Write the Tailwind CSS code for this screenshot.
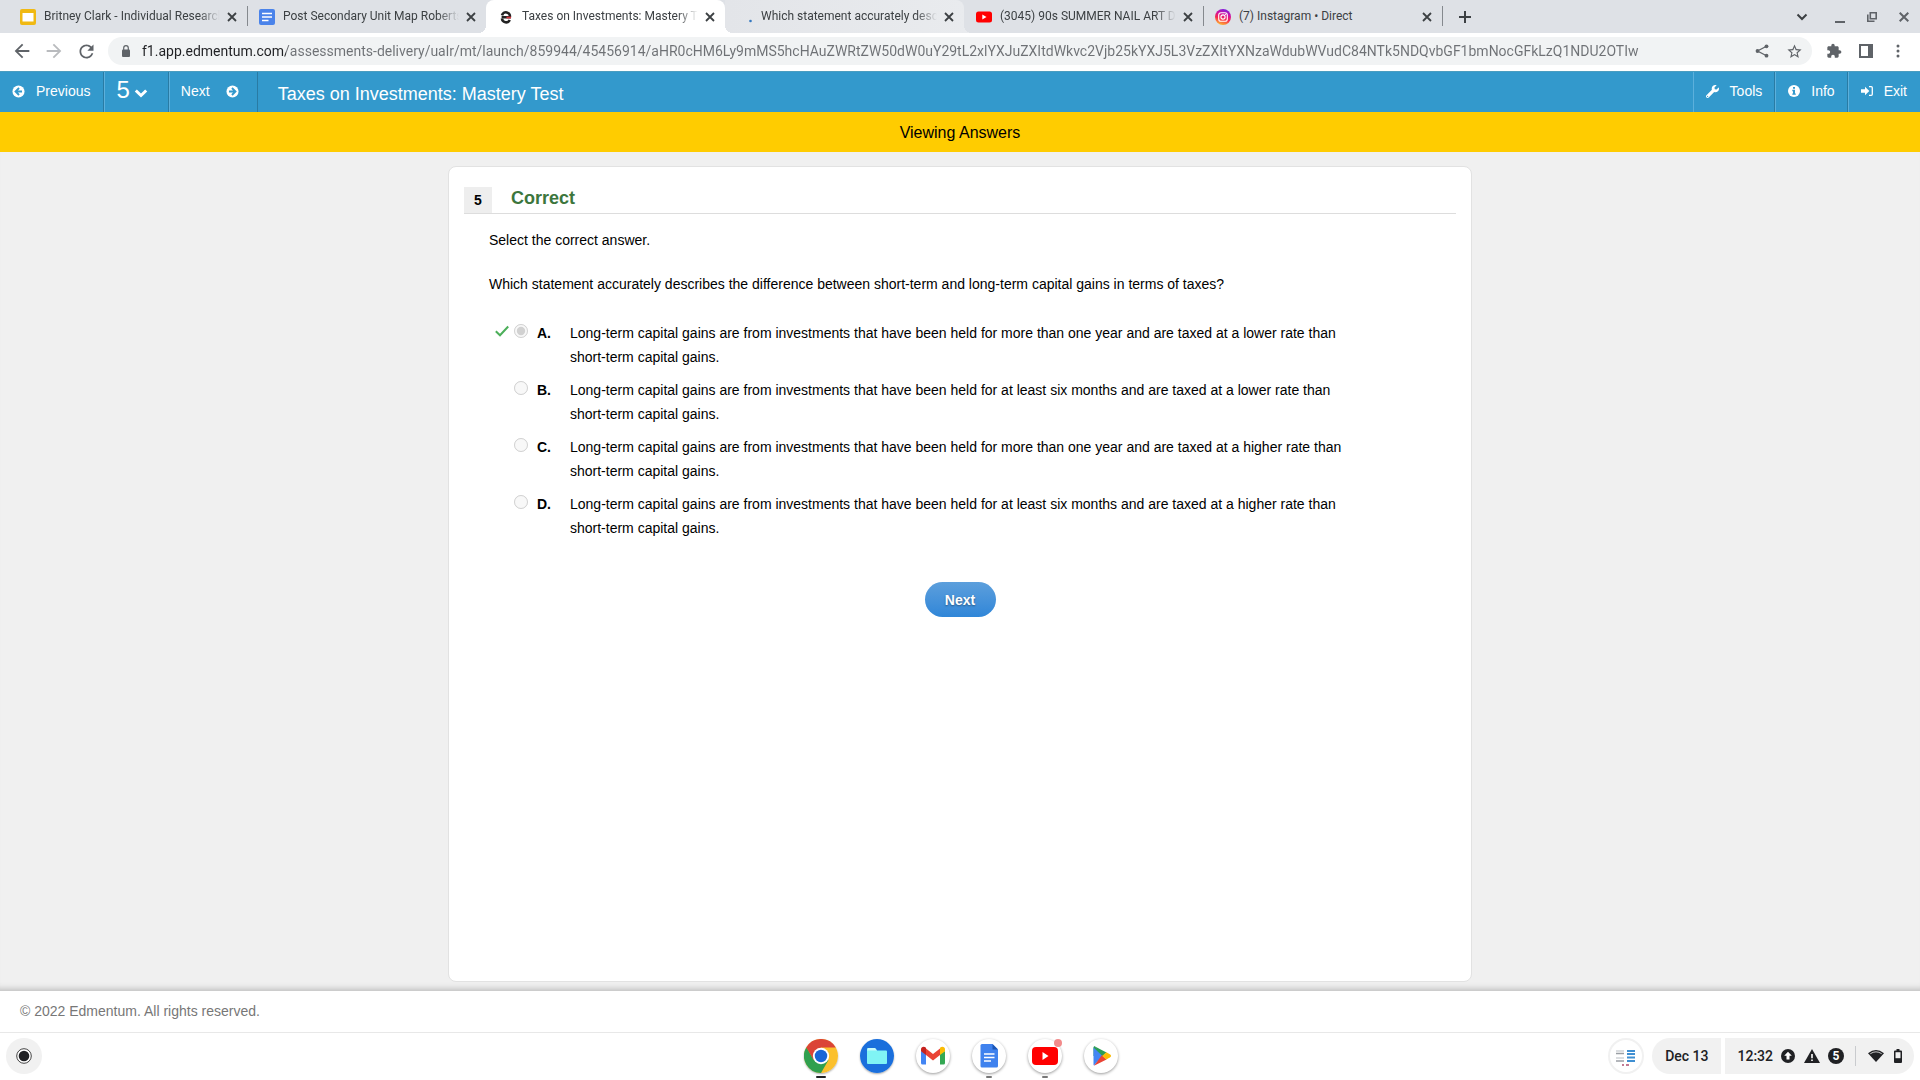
<!DOCTYPE html>
<html lang="en">
<head>
    <meta charset="UTF-8">
    <meta name="viewport" content="width=device-width, initial-scale=1.0">
    <title>Taxes on Investments: Mastery Test</title>
    <script src="https://cdn.jsdelivr.net/npm/@tailwindcss/browser@4"></script>
</head>
<body class="min-h-screen flex flex-col bg-white font-['Liberation_Sans',Arial,sans-serif] text-sm text-black">

    <!-- Browser tabs -->
    <div class="h-[33px] flex items-stretch justify-between bg-[#dee1e6] font-[Roboto,sans-serif] text-xs text-[#3c4043]">
        <div class="flex pl-2 min-w-0">
            <div class="w-[239px] flex items-center pl-3 pr-[7px]">
                <svg class="size-4 shrink-0" viewBox="0 0 16 16"><rect width="16" height="16" rx="2" fill="#f0b913"/><rect x="2.500" y="4" width="11" height="8.500" fill="#fff"/></svg>
                <span class="flex-1 ml-2 pb-px overflow-hidden whitespace-nowrap [mask-image:linear-gradient(to_right,black_88%,transparent)]">Britney Clark - Individual Research</span>
                <button class="size-4 ml-1 flex items-center justify-center" aria-label="Close tab"><svg class="size-2.5" viewBox="0 0 10 10" stroke="#3c4043" stroke-width="1.800"><path d="M1 1l8 8M9 1l-8 8"/></svg></button>
            </div>
            <div class="relative w-[239px] flex items-center pl-3 pr-[7px] before:absolute before:left-0 before:top-1.5 before:h-5 before:w-px before:bg-[#85898e]">
                <svg class="size-4 shrink-0" viewBox="0 0 16 16"><rect width="16" height="16" rx="2" fill="#4a83ea"/><path d="M3 4.500h10M3 8h10M3 11.500h6.500" stroke="#fff" stroke-width="1.500"/></svg>
                <span class="flex-1 ml-2 pb-px overflow-hidden whitespace-nowrap [mask-image:linear-gradient(to_right,black_88%,transparent)]">Post Secondary Unit Map Roberts</span>
                <button class="size-4 ml-1 flex items-center justify-center" aria-label="Close tab"><svg class="size-2.5" viewBox="0 0 10 10" stroke="#3c4043" stroke-width="1.800"><path d="M1 1l8 8M9 1l-8 8"/></svg></button>
            </div>
            <div class="relative z-10 w-[239px] flex items-center pl-3 pr-[7px] bg-white rounded-t-lg before:absolute before:-left-2 before:bottom-0 before:size-2 before:bg-[radial-gradient(circle_at_0_0,transparent_8px,white_8px)] after:absolute after:-right-2 after:bottom-0 after:size-2 after:bg-[radial-gradient(circle_at_100%_0,transparent_8px,white_8px)]">
                <svg class="size-4 shrink-0" viewBox="0 0 16 16" fill="none" stroke-width="2.600"><path d="M3.600 8.300H11.800A4 4 0 0 0 4 6.400" stroke="#222"/><path d="M4 9.500A4.100 4.100 0 0 0 11.800 11" stroke="#222"/><path d="M8.500 8.500h4.500" stroke="#d8343d" stroke-width="1.800"/></svg>
                <span class="flex-1 ml-2 pb-px overflow-hidden whitespace-nowrap [mask-image:linear-gradient(to_right,black_88%,transparent)]">Taxes on Investments: Mastery Test</span>
                <button class="size-4 ml-1 flex items-center justify-center" aria-label="Close tab"><svg class="size-2.5" viewBox="0 0 10 10" stroke="#3c4043" stroke-width="1.800"><path d="M1 1l8 8M9 1l-8 8"/></svg></button>
            </div>
            <div class="relative w-[239px] flex items-center pl-3 pr-[7px] rounded-tr-lg bg-linear-to-r from-[#e3e5e9] to-[#e9ebee] after:absolute after:-right-2 after:bottom-0 after:size-2 after:bg-[radial-gradient(circle_at_100%_0,transparent_8px,#e9ebee_8px)]">
                <svg class="size-4 shrink-0" viewBox="0 0 16 16"><circle cx="13.500" cy="12" r="1.300" fill="#3578c0"/></svg>
                <span class="flex-1 ml-2 pb-px overflow-hidden whitespace-nowrap [mask-image:linear-gradient(to_right,black_88%,transparent)]">Which statement accurately describes</span>
                <button class="size-4 ml-1 flex items-center justify-center" aria-label="Close tab"><svg class="size-2.5" viewBox="0 0 10 10" stroke="#3c4043" stroke-width="1.800"><path d="M1 1l8 8M9 1l-8 8"/></svg></button>
            </div>
            <div class="w-[239px] flex items-center pl-3 pr-[7px]">
                <svg class="size-4 shrink-0" viewBox="0 0 16 16"><rect y="2.500" width="16" height="11" rx="2.500" fill="#f00"/><path d="M6.300 5.500v5l4.200-2.500z" fill="#fff"/></svg>
                <span class="flex-1 ml-2 pb-px overflow-hidden whitespace-nowrap [mask-image:linear-gradient(to_right,black_88%,transparent)]">(3045) 90s SUMMER NAIL ART DESIGNS</span>
                <button class="size-4 ml-1 flex items-center justify-center" aria-label="Close tab"><svg class="size-2.5" viewBox="0 0 10 10" stroke="#3c4043" stroke-width="1.800"><path d="M1 1l8 8M9 1l-8 8"/></svg></button>
            </div>
            <div class="relative w-[239px] flex items-center pl-3 pr-[7px] before:absolute before:left-0 before:top-1.5 before:h-5 before:w-px before:bg-[#85898e] after:absolute after:-right-px after:top-1.5 after:h-5 after:w-px after:bg-[#85898e]">
                <svg class="size-4 shrink-0" viewBox="0 0 16 16" fill="none"><defs><linearGradient id="insta" x1=".3" y1="1" x2=".6" y2="0"><stop offset="0" stop-color="#fdc02f"/><stop offset=".4" stop-color="#f7284f"/><stop offset=".7" stop-color="#d010a0"/><stop offset="1" stop-color="#7a1fe0"/></linearGradient></defs><circle cx="8" cy="8" r="8" fill="url(#insta)"/><rect x="3.700" y="3.700" width="8.600" height="8.600" rx="2.400" stroke="#fff" stroke-width="1.100"/><circle cx="8" cy="8" r="2.100" stroke="#fff" stroke-width="1.100"/><circle cx="10.500" cy="5.500" r=".6" fill="#fff"/></svg>
                <span class="flex-1 ml-2 pb-px overflow-hidden whitespace-nowrap">(7) Instagram • Direct</span>
                <button class="size-4 ml-1 flex items-center justify-center" aria-label="Close tab"><svg class="size-2.5" viewBox="0 0 10 10" stroke="#3c4043" stroke-width="1.800"><path d="M1 1l8 8M9 1l-8 8"/></svg></button>
            </div>
            <button class="w-[45px] flex items-center justify-center" aria-label="New tab"><svg class="size-3" viewBox="0 0 12 12" stroke="#3c4043" stroke-width="2"><path d="M6 0v12M0 6h12"/></svg></button>
        </div>
        <div class="flex items-center">
            <button class="w-8 mr-1.5 flex justify-center" aria-label="Search tabs"><svg class="w-3 h-2" viewBox="0 0 12 8" fill="none" stroke="#3c4043" stroke-width="2"><path d="M1.500 1.500L6 6l4.500-4.500"/></svg></button>
            <button class="w-8 h-3 flex justify-center items-end" aria-label="Minimize"><svg class="w-2.5 h-0.5" viewBox="0 0 10 2"><path d="M0 0h10v2H0z" fill="#5f6368"/></svg></button>
            <button class="w-8 flex justify-center" aria-label="Restore"><svg class="size-2.5" viewBox="0 0 10 10" fill="none" stroke="#5f6368" stroke-width="1.600"><path d="M3.300.8h5.900v5.900H3.300zM.8 2.500v6.700h6.700"/></svg></button>
            <button class="w-8 flex justify-center" aria-label="Close"><svg class="size-2.5" viewBox="0 0 10 10" stroke="#5f6368" stroke-width="2"><path d="M.7.700l8.600 8.600M9.300.7L.7 9.300"/></svg></button>
        </div>
    </div>

    <!-- Address bar -->
    <div class="h-[38px] flex items-center px-1.5 pb-0.5 bg-white">
        <button class="w-8 flex justify-center" aria-label="Back"><svg class="size-[22px]" viewBox="0 0 24 24" fill="#5f6368"><path d="M20 11H7.830l5.590-5.590L12 4l-8 8 8 8 1.410-1.410L7.830 13H20v-2z"/></svg></button>
        <button class="w-8 flex justify-center" aria-label="Forward"><svg class="size-[22px] rotate-180" viewBox="0 0 24 24" fill="#b9bbbe"><path d="M20 11H7.830l5.590-5.590L12 4l-8 8 8 8 1.410-1.410L7.830 13H20v-2z"/></svg></button>
        <button class="w-8 flex justify-center" aria-label="Reload"><svg class="size-[21px]" viewBox="0 0 24 24" fill="#5f6368"><path d="M17.650 6.350C16.200 4.900 14.210 4 12 4c-4.420 0-7.990 3.580-7.990 8s3.570 8 7.990 8c3.730 0 6.840-2.550 7.730-6h-2.080c-.82 2.330-3.040 4-5.650 4-3.310 0-6-2.690-6-6s2.690-6 6-6c1.660 0 3.140.69 4.220 1.780L13 11h7V4l-2.350 2.350z"/></svg></button>
        <div class="flex-1 h-7 flex items-center ml-1.5 mr-1.5 pl-3 pr-0.5 rounded-full bg-[#f1f3f4]">
            <svg class="w-3 h-3 shrink-0" viewBox="0 0 12 12"><rect x="2" y="4.500" width="8" height="7.500" rx="1" fill="#5f6368"/><path d="M3.700 5V3a2.300 2.300 0 0 1 4.600 0v2" fill="none" stroke="#5f6368" stroke-width="1.200"/></svg>
            <input type="text" aria-label="Address" class="flex-1 min-w-0 ml-2.5 outline-none font-[Roboto,sans-serif] text-sm text-transparent bg-clip-text bg-[linear-gradient(to_right,#202124_144px,#6e7175_144px)]" value="f1.app.edmentum.com/assessments-delivery/ualr/mt/launch/859944/45456914/aHR0cHM6Ly9mMS5hcHAuZWRtZW50dW0uY29tL2xlYXJuZXItdWkvc2Vjb25kYXJ5L3VzZXItYXNzaWdubWVudC84NTk5NDQvbGF1bmNocGFkLzQ1NDU2OTIw">
            <button class="w-8 flex justify-center" aria-label="Share"><svg class="size-3.5" viewBox="0 0 14 14" fill="#5f6368"><path d="M11.500 2.200L2.500 7l9 4.800" fill="none" stroke="#5f6368" stroke-width="1.300"/><circle cx="11.500" cy="2.300" r="1.900"/><circle cx="2.500" cy="7" r="1.900"/><circle cx="11.500" cy="11.700" r="1.900"/></svg></button>
            <button class="w-8 flex justify-center" aria-label="Bookmark"><svg class="size-[17px]" viewBox="0 0 24 24" fill="#5f6368"><path d="M22 9.240l-7.190-.62L12 2 9.190 8.630 2 9.240l5.460 4.730L5.820 21 12 17.270 18.180 21l-1.630-7.030L22 9.240zM12 15.400l-3.760 2.270 1-4.280-3.320-2.880 4.380-.38L12 6.100l1.710 4.040 4.380.38-3.320 2.880 1 4.280L12 15.400z"/></svg></button>
        </div>
        <button class="w-8 flex justify-center" aria-label="Extensions"><svg class="size-4" viewBox="0 0 24 24" fill="#5f6368"><path d="M20.500 11H19V7c0-1.100-.9-2-2-2h-4V3.500C13 2.120 11.880 1 10.500 1S8 2.120 8 3.500V5H4c-1.100 0-1.990.9-1.990 2v3.800H3.500c1.490 0 2.700 1.210 2.700 2.700s-1.210 2.700-2.700 2.700H2V20c0 1.100.9 2 2 2h3.800v-1.500c0-1.490 1.210-2.700 2.700-2.700 1.490 0 2.700 1.210 2.700 2.700V22H17c1.100 0 2-.9 2-2v-4h1.500c1.380 0 2.500-1.120 2.500-2.500S21.880 11 20.500 11z"/></svg></button>
        <button class="w-8 flex justify-center" aria-label="Side panel"><svg class="size-3.5" viewBox="0 0 14 14"><rect x="1" y="1" width="12" height="12" fill="none" stroke="#5f6368" stroke-width="2"/><path d="M9 0h5v14H9z" fill="#5f6368"/></svg></button>
        <button class="w-8 flex justify-center" aria-label="Menu"><svg class="w-1 h-3.5" viewBox="0 0 4 14" fill="#5f6368"><circle cx="2" cy="2" r="1.500"/><circle cx="2" cy="7" r="1.500"/><circle cx="2" cy="12" r="1.500"/></svg></button>
    </div>

    <!-- Test navigation -->
    <header class="h-[41px] flex items-stretch justify-between bg-[#3399cc] border-t border-[#4a9dc0] text-white">
        <div class="flex">
            <button class="flex items-center gap-[11px] pl-3 pr-[13px] pb-0.5 border-r border-[#297ba4]">
                <svg class="size-[13px]" viewBox="0 0 14 14"><circle cx="7" cy="7" r="6.500" fill="#fff"/><path d="M7.600 3.200L3.800 7l3.800 3.800M4 7h6.800" fill="none" stroke="#39c" stroke-width="2"/></svg>
                Previous
            </button>
            <button class="flex items-center gap-1 pl-[11px] pr-5 pb-1 border-l border-l-[#5cb0dc] border-r border-r-[#297ba4] text-2xl" aria-label="Question 5">
                5
                <svg class="w-[14px] h-[9px] mt-1.5" viewBox="0 0 13 9" fill="none" stroke="#fff" stroke-width="3"><path d="M1.300 1.500l5.200 5 5.200-5"/></svg>
            </button>
            <button class="flex items-center gap-4 pl-[11px] pr-[18px] pb-0.5 border-l border-l-[#5cb0dc] border-r border-r-[#297ba4]">
                Next
                <svg class="size-[13px]" viewBox="0 0 14 14"><circle cx="7" cy="7" r="6.500" fill="#fff"/><path d="M6.400 3.200L10.200 7l-3.800 3.800M10 7H3.200" fill="none" stroke="#39c" stroke-width="2"/></svg>
            </button>
            <h1 class="flex items-center pl-5 pt-1 text-lg">Taxes on Investments: Mastery Test</h1>
        </div>
        <div class="flex">
            <button class="flex items-center gap-[11px] px-3 pb-0.5 border-l border-l-[#5cb0dc] border-r border-r-[#297ba4]">
                <svg class="size-[13px]" viewBox="0 0 512 512" fill="#fff"><path d="M507.730 109.100c-2.240-9.030-13.540-12.090-20.120-5.510l-74.360 74.360-67.880-11.310-11.310-67.880 74.360-74.360c6.620-6.620 3.430-17.900-5.660-20.160-47.380-11.740-99.550.91-136.580 37.930-39.640 39.640-50.550 97.100-34.050 147.200L18.740 402.760c-24.990 24.990-24.990 65.510 0 90.500 24.990 24.990 65.510 24.990 90.500 0l213.210-213.210c50.120 16.710 107.470 5.680 147.370-34.220 37.070-37.070 49.700-89.320 37.910-136.730zM64 472c-13.250 0-24-10.750-24-24 0-13.260 10.750-24 24-24s24 10.740 24 24c0 13.250-10.750 24-24 24z"/></svg>
                Tools
            </button>
            <button class="flex items-center gap-[11px] px-3 pb-0.5 border-l border-l-[#5cb0dc] border-r border-r-[#297ba4]">
                <svg class="size-3" viewBox="0 0 12 12"><circle cx="6" cy="6" r="6" fill="#fff"/><path d="M5 2h2v1.700H5zM4.300 4.800H7v3.600h.8v1.400H4.300V8.400H5V6.200h-.7z" fill="#39c"/></svg>
                Info
            </button>
            <button class="flex items-center gap-[11px] pl-3 pr-[13px] pb-0.5 border-l border-l-[#5cb0dc]">
                <svg class="w-3 h-2.5" viewBox="0 0 12 10"><path d="M4 .8L8.300 5 4 9.200V6.700H0V3.300h4z" fill="#fff"/><path d="M8 .7h2.200q1.100 0 1.100 1.100v6.400q0 1.100-1.100 1.100H8" fill="none" stroke="#fff" stroke-width="1.300"/></svg>
                Exit
            </button>
        </div>
    </header>
    <div class="h-10 pt-0.5 flex items-center justify-center bg-[#ffcc00] text-base">Viewing Answers</div>

    <!-- Question card -->
    <main class="flex-1 flex justify-center pt-3.5 pb-[9px] bg-[#f0f0f0] shadow-[inset_0_-8px_6px_-6px_#bbb]">
        <section class="w-full max-w-[1024px] px-[15px] pt-4 bg-white border border-[#e2e2e2] rounded-lg">
            <div class="flex items-end border-b border-[#dddddd]">
                <span class="w-7 h-[26px] flex items-center justify-center bg-[#eeeeee] font-bold">5</span>
                <h2 class="ml-[19px] text-lg leading-[30px] font-bold text-[#3c763d]">Correct</h2>
            </div>
            <form class="pl-[25px] pr-24 pt-3.5 leading-6">
                <p>Select the correct answer.</p>
                <p class="mt-5">Which statement accurately describes the difference between short-term and long-term capital gains in terms of taxes?</p>
                <fieldset class="mt-[25px] flex flex-col gap-[9px]" aria-label="Answers">
                    <label class="flex items-start">
                        <span class="w-[25px] h-5 pl-1.5 flex items-center"><svg class="w-3.5 h-3" viewBox="0 0 14 12" fill="none" stroke="#4caf5a" stroke-width="2"><path d="M.8 6.300L5 10.300 13.200 1.500"/></svg></span>
                        <input type="radio" name="answer" value="A" checked disabled class="size-3.5 mt-[3px]">
                        <b class="w-[33px] ml-[9px]">A.</b>
                        <span class="flex-1">Long-term capital gains are from investments that have been held for more than one year and are taxed at a lower rate than short-term capital gains.</span>
                    </label>
                    <label class="flex items-start pl-[25px]">
                        <input type="radio" name="answer" value="B" disabled class="size-3.5 mt-[3px]">
                        <b class="w-[33px] ml-[9px]">B.</b>
                        <span class="flex-1">Long-term capital gains are from investments that have been held for at least six months and are taxed at a lower rate than short-term capital gains.</span>
                    </label>
                    <label class="flex items-start pl-[25px]">
                        <input type="radio" name="answer" value="C" disabled class="size-3.5 mt-[3px]">
                        <b class="w-[33px] ml-[9px]">C.</b>
                        <span class="flex-1">Long-term capital gains are from investments that have been held for more than one year and are taxed at a higher rate than short-term capital gains.</span>
                    </label>
                    <label class="flex items-start pl-[25px]">
                        <input type="radio" name="answer" value="D" disabled class="size-3.5 mt-[3px]">
                        <b class="w-[33px] ml-[9px]">D.</b>
                        <span class="flex-1">Long-term capital gains are from investments that have been held for at least six months and are taxed at a higher rate than short-term capital gains.</span>
                    </label>
                </fieldset>
            </form>
            <div class="mt-[42px] flex justify-center">
                <button class="h-[35px] w-[71px] rounded-full bg-linear-to-b from-[#5c9fdc] to-[#2f86d8] font-bold text-white text-shadow-[0_1px_2px_#00000066]">Next</button>
            </div>
        </section>
    </main>
    <footer class="h-[41px] flex items-center pl-5 pb-0.5 bg-white text-[#777777]">© 2022 Edmentum. All rights reserved.</footer>

    <!-- System shelf -->
    <div class="h-12 grid grid-cols-[1fr_auto_1fr] items-center px-1.5 pb-0.5 border-t border-[#e8e8e8] bg-white font-[Roboto,sans-serif] font-medium text-[#202124]">
        <button class="size-9 flex items-center justify-center rounded-full bg-[#f1f1f1]" aria-label="Launcher"><svg class="size-4" viewBox="0 0 16 16"><circle cx="8" cy="8" r="7.300" fill="#fff" stroke="#444" stroke-width="1"/><circle cx="8" cy="8" r="5.300" fill="#202124"/></svg></button>
        <div class="flex gap-[22px] pl-0.5">
            <button class="relative size-[34px] rounded-full shadow-[0_1px_2px_#0005]" aria-label="Chrome">
                <svg viewBox="0 0 48 48"><circle cx="24" cy="24" r="24" fill="#fbc02d"/><path d="M24 24L3.200 12A24 24 0 0 1 44.800 12H24z" fill="#db4437"/><path d="M3.200 12A24 24 0 0 0 24 48l10.400-18L24 24 13.600 30z" fill="#30a04f"/><path d="M3.200 12L13.600 30 24 24V12z" fill="#db4437"/><path d="M3.200 12L13.600 30l6 4L8 30z" fill="#30a04f"/><circle cx="24" cy="24" r="11.500" fill="#fff"/><circle cx="24" cy="24" r="8.800" fill="#1a66d6"/></svg>
                <span class="absolute left-3 -bottom-[5px] w-2.5 h-0.5 rounded bg-[#202124]"></span>
            </button>
            <button class="size-[34px] rounded-full shadow-[0_1px_2px_#0005]" aria-label="Files">
                <svg viewBox="0 0 34 34"><circle cx="17" cy="17" r="17" fill="#1a6fdc"/><path d="M8 9h7l2 2.500h9q1 0 1 1V24q0 1-1 1H8q-1 0-1-1V10q0-1 1-1z" fill="#80f4f5"/><path d="M8 9h7l2 2.500H7.200z" fill="#c8fafa"/></svg>
            </button>
            <button class="size-[34px] rounded-full shadow-[0_1px_3px_#0006]" aria-label="Gmail">
                <svg viewBox="0 0 34 34"><path d="M5 12v12q0 1.500 1.500 1.500H10V15z" fill="#4285f4"/><path d="M29 12v12q0 1.500-1.500 1.500H24V15z" fill="#34a853"/><path d="M10 9.500l7 5.500 7-5.500V16l-7 5.500L10 16z" fill="#ea4335"/><path d="M5 10.500C5 7.500 8 7 10 8.700V16l-5-3.800z" fill="#c5221f"/><path d="M29 10.500C29 7.500 26 7 24 8.700V16l5-3.800z" fill="#fbbc04"/></svg>
            </button>
            <button class="relative size-[34px] rounded-full shadow-[0_1px_3px_#0006]" aria-label="Docs">
                <svg viewBox="0 0 34 34"><path d="M10 5h10.500l5.500 5.500V27q0 1.500-1.500 1.500H10Q8.500 28.500 8.500 27V6.500Q8.500 5 10 5z" fill="#3f82ee"/><path d="M20.500 5l5.500 5.500h-5.500z" fill="#1c57b5"/><path d="M12 15h10.500M12 18.500h10.500M12 22h7" stroke="#fff" stroke-width="1.500"/></svg>
                <span class="absolute left-3.5 -bottom-[5px] w-1.5 h-0.5 rounded bg-[#777]"></span>
            </button>
            <button class="relative size-[34px] rounded-full shadow-[0_1px_3px_#0006]" aria-label="YouTube">
                <svg viewBox="0 0 34 34"><rect x="4" y="8" width="26" height="18" rx="4" fill="#f00"/><path d="M14.500 13v8l6-4z" fill="#fff"/></svg>
                <span class="absolute right-0 top-0 size-2 rounded-full bg-[#f28b8b]"></span>
                <span class="absolute left-3.5 -bottom-[5px] w-1.5 h-0.5 rounded bg-[#777]"></span>
            </button>
            <button class="size-[34px] rounded-full shadow-[0_1px_3px_#0006]" aria-label="Play Store">
                <svg viewBox="0 0 34 34"><path d="M10.500 7q-1 .5-1 1.500V17h9z" fill="#2a9d55"/><path d="M10.500 7.300L22.500 13.500 17.500 18z" fill="#2a9d55"/><path d="M9.500 8.500v17q0 .7.500 1L18.500 17z" fill="#4285f4"/><path d="M10 26.700L22.500 20.500 18 16z" fill="#ea4335"/><path d="M22.300 13.300l3.500 2q2.500 1.700 0 3.300l-3.500 2L18.200 17z" fill="#fbbc04"/></svg>
            </button>
        </div>
        <div class="flex items-center justify-end">
            <button class="size-9 mr-2 flex items-center justify-center rounded-full border-2 border-[#f1f1f1]" aria-label="Screenshot"><svg class="size-6" viewBox="0 0 24 24" fill="none" stroke-width="1.500"><path d="M13 7h8M13 10h8M13 13.500h8M13 17h8" stroke="#3f8fd2" stroke-width="2"/><path d="M2 7h8M2 14h8" stroke="#cfd3d8"/><path d="M2 9.500h8M2 17h8" stroke="#9a9fa5"/><path d="M8 21h2M12 21h3" stroke="#b05070"/></svg></button>
            <button class="h-9 mr-1 px-[13px] rounded-l-full rounded-r bg-[#f1f1f1]">Dec 13</button>
            <button class="h-9 px-3 flex items-center rounded-l rounded-r-full bg-[#f1f1f1]">
                12:32
                <svg class="size-3.5 ml-2" viewBox="0 0 14 14"><circle cx="7" cy="7" r="7" fill="#202124"/><path d="M7 2.800l3.800 4H8.500v3.700h-3V6.800H3.200z" fill="#fff"/></svg>
                <svg class="w-4 h-3.5 ml-[9px]" viewBox="0 0 16 14"><path d="M8 0l8 14H0z" fill="#202124"/><path d="M7.200 5h1.600v4.200H7.200zM7.200 10.500h1.600v1.600H7.200z" fill="#fff"/></svg>
                <span class="size-4 ml-2 flex items-center justify-center rounded-full bg-[#202124] text-xs font-bold text-white">5</span>
                <span class="w-px h-5 ml-[11px] bg-[#c9cbce]"></span>
                <svg class="w-4 h-3 ml-3" viewBox="0 0 16 12"><path d="M0 3.200Q8-3 16 3.200L8 12z" fill="#202124"/><path d="M2.300 3.700Q8 0 13.700 3.700" fill="none" stroke="#f1f1f1" stroke-width=".8"/></svg>
                <svg class="w-2 h-3.5 ml-2.5" viewBox="0 0 8 14"><path d="M2.500 0h3v1.500H7q1 0 1 1V13q0 1-1 1H1q-1 0-1-1V2.500q0-1 1-1h1.500z" fill="#202124"/><path d="M1.500 3.200h5v6h-5z" fill="#f1f1f1"/></svg>
            </button>
        </div>
    </div>
</body>
</html>
